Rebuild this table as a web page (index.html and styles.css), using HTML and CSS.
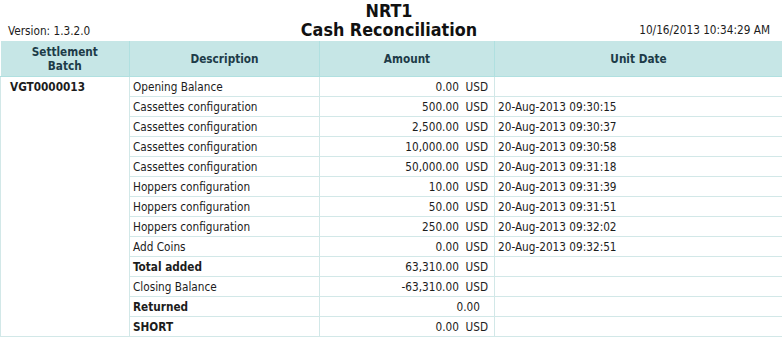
FILE: index.html
```html
<!DOCTYPE html>
<html>
<head>
<meta charset="utf-8">
<link rel="stylesheet" href="styles.css">
</head>
<body>
<div class="top">
  <div class="version">Version: 1.3.2.0</div>
  <div class="title"><div>NRT1</div><div>Cash Reconciliation</div></div>
  <div class="stamp">10/16/2013 10:34:29 AM</div>
</div>
<table class="recon">
  <colgroup>
    <col class="c1"><col class="c2"><col class="c3"><col class="c4">
  </colgroup>
  <thead>
    <tr><th>Settlement<br>Batch</th><th>Description</th><th>Amount</th><th>Unit Date</th></tr>
  </thead>
  <tbody>
    <tr><td class="batch" rowspan="13">VGT0000013</td><td class="desc">Opening Balance</td><td class="amt">0.00&nbsp;&nbsp;USD</td><td class="date"></td></tr>
    <tr><td class="desc">Cassettes configuration</td><td class="amt">500.00&nbsp;&nbsp;USD</td><td class="date">20-Aug-2013 09:30:15</td></tr>
    <tr><td class="desc">Cassettes configuration</td><td class="amt">2,500.00&nbsp;&nbsp;USD</td><td class="date">20-Aug-2013 09:30:37</td></tr>
    <tr><td class="desc">Cassettes configuration</td><td class="amt">10,000.00&nbsp;&nbsp;USD</td><td class="date">20-Aug-2013 09:30:58</td></tr>
    <tr><td class="desc">Cassettes configuration</td><td class="amt">50,000.00&nbsp;&nbsp;USD</td><td class="date">20-Aug-2013 09:31:18</td></tr>
    <tr><td class="desc">Hoppers configuration</td><td class="amt">10.00&nbsp;&nbsp;USD</td><td class="date">20-Aug-2013 09:31:39</td></tr>
    <tr><td class="desc">Hoppers configuration</td><td class="amt">50.00&nbsp;&nbsp;USD</td><td class="date">20-Aug-2013 09:31:51</td></tr>
    <tr><td class="desc">Hoppers configuration</td><td class="amt">250.00&nbsp;&nbsp;USD</td><td class="date">20-Aug-2013 09:32:02</td></tr>
    <tr><td class="desc">Add Coins</td><td class="amt">0.00&nbsp;&nbsp;USD</td><td class="date">20-Aug-2013 09:32:51</td></tr>
    <tr><td class="desc strong">Total added</td><td class="amt">63,310.00&nbsp;&nbsp;USD</td><td class="date"></td></tr>
    <tr><td class="desc">Closing Balance</td><td class="amt">-63,310.00&nbsp;&nbsp;USD</td><td class="date"></td></tr>
    <tr><td class="desc strong">Returned</td><td class="amt nocur">0.00</td><td class="date"></td></tr>
    <tr><td class="desc strong">SHORT</td><td class="amt">0.00&nbsp;&nbsp;USD</td><td class="date"></td></tr>
  </tbody>
</table>
</body>
</html>
```
FILE: styles.css
```css
html, body {
  margin: 0;
  padding: 0;
  background: #ffffff;
}
body {
  font-family: "DejaVu Sans", Verdana, sans-serif;
  font-stretch: condensed;
  font-size: 11.7px;
  color: #1c1c1c;
  width: 782px;
}
.top {
  display: grid;
  grid-template-columns: 1fr auto 1fr;
  align-items: end;
  height: 41px;
  box-sizing: border-box;
  padding: 0 12px 0 8px;
}
.version {
  padding-bottom: 3px;
}
.stamp {
  text-align: right;
  padding-bottom: 4px;
}
.title {
  text-align: center;
  font-weight: bold;
  font-size: 17.8px;
  line-height: 19px;
  color: #111;
  padding-bottom: 2px;
}
.recon {
  border-collapse: collapse;
  table-layout: fixed;
  width: 782px;
}
.c1 { width: 129px; }
.c2 { width: 190px; }
.c3 { width: 175px; }
.c4 { width: 288px; }
.recon th {
  background: #c6e6e6;
  color: #1d3b48;
  font-weight: bold;
  height: 35px;
  padding: 0;
  line-height: 14px;
  border: 1px solid #b0e0e0;
  border-top: none;
  text-align: center;
}
.recon th:first-child { border-left: none; }
.recon td {
  border: 1px solid #d2e8e8;
  height: 19px;
  padding: 0 3px;
  white-space: nowrap;
  vertical-align: middle;
}
.recon td.batch {
  vertical-align: top;
  font-weight: bold;
  padding: 3px 8px 0 9px;
}
.strong { font-weight: bold; }
.amt {
  text-align: right;
  padding-right: 6px !important;
}
.amt.nocur {
  padding-right: 14px !important;
}
```
